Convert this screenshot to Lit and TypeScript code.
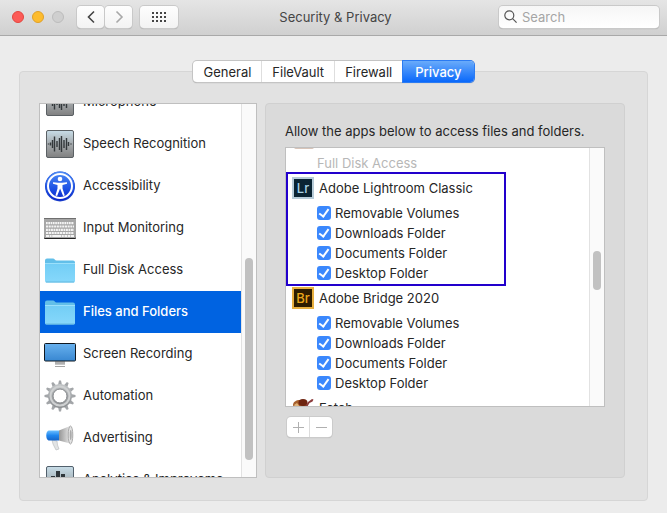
import { LitElement, html, css, svg } from "lit";
import { customElement } from "lit/decorators.js";
import { classMap } from "lit/directives/class-map.js";

const folder = svg`<svg width="32" height="32" viewBox="0 0 32 32">
  <path d="M1 6.500a2 2 0 0 1 2-2h6c1.500 0 2 2 3.500 2H29a2 2 0 0 1 2 2v4H1z" fill="#62bfe9"/>
  <rect x="1" y="9" width="30" height="19.500" rx="1.500" fill="url(#folderFill)"/>
  <path d="M1 9.500h30" stroke="#9be0fb"/><path d="M2 28h28" stroke="#62b8df"/>
  <defs><linearGradient id="folderFill" x2="0" y2="1"><stop stop-color="#72cdf5"/><stop offset="1" stop-color="#86d8fb"/></linearGradient></defs></svg>`;

const wave = svg`<svg width="32" height="32" viewBox="0 0 32 32">
  <defs><linearGradient id="waveFill" x2="0" y2="1"><stop stop-color="#c8dde8"/><stop offset=".5" stop-color="#a5aaad"/><stop offset="1" stop-color="#808080"/></linearGradient></defs>
  <rect x="2.500" y="2.500" width="27" height="27" rx="1.500" fill="url(#waveFill)" stroke="#5b6064"/>
  <path d="M4.500 15.500v1M6.500 14.500v3M8.500 12v8M10.500 8.500v15M13 13v6M15.500 10v12M17.500 8v16M20 12v8M22.500 10v12M24.500 14v4M27 15.500v1" stroke="#33383b" stroke-width="1.400"/></svg>`;

const accessibility = svg`<svg width="32" height="32" viewBox="0 0 32 32">
  <defs><linearGradient id="accFill" x2="0" y2="1"><stop stop-color="#4f8df5"/><stop offset=".6" stop-color="#1c50e4"/><stop offset="1" stop-color="#0a22c8"/></linearGradient></defs>
  <circle cx="16" cy="16.500" r="15" fill="#1d45cc"/><circle cx="16" cy="16" r="14.500" fill="url(#accFill)"/>
  <circle cx="16" cy="16" r="12" fill="none" stroke="#fff" stroke-width="2"/>
  <circle cx="16" cy="9" r="2.300" fill="#fff"/>
  <path d="M9 12.200l5 .6h4l5-.6v1.600l-4.500 1.200v3.500l2.300 7-1.700.5-3-7.500-3 7.500-1.700-.5 2.100-7V15L9 13.800z" fill="#fff"/></svg>`;

const keyboard = svg`<svg width="32" height="32" viewBox="0 0 32 32">
  <rect x="0" y="7" width="32" height="20" rx="1" fill="#222"/><rect x="0" y="6" width="32" height="20" rx="1" fill="#a6a6a6"/>
  <rect x="0" y="6" width="32" height="1" fill="#6f6f6f"/>
  <g stroke="#f4f4f4" stroke-width="2.200"><path d="M2 11.200h28" stroke-dasharray="1.700 .6"/><path d="M2 14.500h28" stroke-dasharray="2.100 .6"/><path d="M2 17.800h28" stroke-dasharray="1.900 .6"/><path d="M2 21h28" stroke-dasharray="2.200 .6"/><path d="M2 24h28" stroke-dasharray="3 .6 2 .6 9 .6 2 .6"/></g></svg>`;

const screen = svg`<svg width="32" height="32" viewBox="0 0 32 32">
  <defs><linearGradient id="screenFill" x2="0" y2="1"><stop stop-color="#68b1ee"/><stop offset="1" stop-color="#3887d1"/></linearGradient></defs>
  <path d="M11 23h10v4H11z" fill="#c6c6c6"/><path d="M11 25h10" stroke="#9a9a9a"/><path d="M11 28.500h10" stroke="#a5a5a5"/>
  <rect x=".5" y="5.500" width="31" height="17.500" rx="1" fill="url(#screenFill)" stroke="#101820"/></svg>`;

const gear = svg`<svg width="32" height="32" viewBox="0 0 32 32">
  <defs><linearGradient id="gearFill" x2="0" y2="1"><stop stop-color="#c3c6c8"/><stop offset="1" stop-color="#8b8e91"/></linearGradient></defs>
  ${[0, 30, 60, 90, 120, 150].map(
    (a) => svg`<path d="M15 .5h2l1 4.500v22l-1 4.500h-2l-1-4.500V5z" fill="#a3a6a9" transform="rotate(${a} 16 16)"/>`
  )}<circle cx="16" cy="16" r="12" fill="url(#gearFill)"/>
  <circle cx="16" cy="16" r="9.500" fill="none" stroke="#cfd1d2" stroke-width="2"/>
  <circle cx="16" cy="16" r="7" fill="#fff" stroke="#85888b"/></svg>`;

const megaphone = svg`<svg width="32" height="32" viewBox="0 0 32 32">
  <defs><linearGradient id="hornFill" x2="1"><stop stop-color="#969696"/><stop offset=".7" stop-color="#dcdcdc"/><stop offset="1" stop-color="#bdbdbd"/></linearGradient>
  <linearGradient id="blueFill" x2="0" y2="1"><stop stop-color="#6cc0ff"/><stop offset=".5" stop-color="#1f86ee"/><stop offset="1" stop-color="#1765c8"/></linearGradient></defs>
  <path d="M8 18l5 1 .5 4 1.500 4-3 1L9 22z" fill="#e2e4e5" stroke="#b4b7b9" stroke-width=".6"/>
  <path d="M15 8.500l11-4.500c3.500 4 3.500 13 0 17.500l-11-3z" fill="url(#hornFill)"/>
  <ellipse cx="26.500" cy="13" rx="2.300" ry="9" fill="#e4e4e4" stroke="#aaa"/><ellipse cx="26.700" cy="13" rx="1" ry="5" fill="#aaa"/>
  <path d="M4.500 8.500H15v10H4.500c-3-1-3-9 0-10z" fill="url(#blueFill)"/></svg>`;

const chart = svg`<svg width="32" height="32" viewBox="0 0 32 32">
  <defs><linearGradient id="chartFill" x2="0" y2="1"><stop stop-color="#c8dde8"/><stop offset="1" stop-color="#8b8f91"/></linearGradient></defs>
  <rect x="2.500" y="2.500" width="27" height="27" rx="1.500" fill="url(#chartFill)" stroke="#52606c"/>
  <path d="M7 12h4v14H7zM12 7h4v19h-4zM17 10h4v16h-4zM22 14h4v12h-4z" fill="#30373c"/></svg>`;

const fetchDog = svg`<svg width="22" height="22" viewBox="0 0 22 22">
  <path d="M1 8c0-3 3-5 7-5l5 1 2 5-3 11H4z" fill="#a65f2c"/><path d="M2 8l3-2 3 4-3 3z" fill="#e0b27a"/>
  <ellipse cx="11" cy="5.500" rx="4.500" ry="3.500" fill="#6e2410"/><path d="M13 10l3-5 4-3 1.500.500-1 2-3 1.500-3 5z" fill="#8a3a3a"/></svg>`;

const places = [
  { name: "Microphone", icon: wave },
  { name: "Speech Recognition", icon: wave },
  { name: "Accessibility", icon: accessibility },
  { name: "Input Monitoring", icon: keyboard },
  { name: "Full Disk Access", icon: folder },
  { name: "Files and Folders", icon: folder, selected: true },
  { name: "Screen Recording", icon: screen },
  { name: "Automation", icon: gear },
  { name: "Advertising", icon: megaphone },
  { name: "Analytics & Improveme…", icon: chart },
];

const grants = ["Removable Volumes", "Downloads Folder", "Documents Folder", "Desktop Folder"];

@customElement("app-root")
export class AppRoot extends LitElement {
  static styles = css`
    :host { display: flex; flex-direction: column; height: 100vh; background: #ececec; color: #262626;
      font: 13px/20px Inter, "Liberation Sans", sans-serif; }
    *, *::before, *::after { box-sizing: border-box; }
    svg { display: block; flex: none; }
    button, input { font: inherit; color: inherit; margin: 0; padding: 0; border: 0; }
    ul { list-style: none; margin: 0; padding: 0; }

    .titlebar { flex: none; display: grid; grid-template-columns: 1fr auto 1fr; align-items: center; height: 36px;
      padding: 0 8px 2px 12px; background: linear-gradient(#e5e5e5, #d0d0d0); border-bottom: 1px solid #a9a9a9; }
    .tools { display: flex; align-items: center; }
    .lights { display: flex; gap: 8px; margin-right: 13px; }
    .light { width: 12px; height: 12px; border-radius: 50%; border: 1px solid #bcbcbc; background: #cfcfcf; }
    .close { background: #fc5b57; border-color: #e2463f; }
    .minimize { background: #fdbc2e; border-color: #e0a028; }
    .tool { display: grid; place-items: center; height: 22px; width: 27px; border-radius: 4px;
      background: linear-gradient(#fefefe, #f3f3f3); box-shadow: 0 0 0 1px #c9c9c9, 0 1px 1px #999; margin-right: 1px; }
    .grid { width: 38px; margin-left: 7px; }
    .title { margin: 0; font-size: 13px; font-weight: 400; color: #454545; }
    .search { justify-self: end; display: flex; align-items: center; gap: 5px; width: 160px; height: 22px; padding: 0 5px;
      border-radius: 4px; background: linear-gradient(#f6f6f6, #fff); box-shadow: 0 0 0 1px #c9c9c9, 0 1px 1px #999; }
    .search input { flex: 1; min-width: 0; background: none; outline: 0; }
    .search input::placeholder { color: #a5a5a5; opacity: 1; }

    .content { flex: 1; min-height: 0; display: flex; flex-direction: column; padding: 25px 19px 12px; }
    .tabs { display: flex; align-self: center; height: 21px; position: relative; border-radius: 4px; background: #fff;
      box-shadow: 0 0 0 1px #c4c4c4, 0 1px 1px #999; margin-bottom: -11px; }
    .tab { padding: 0 10px; background: none; border-right: 1px solid #dedede; }
    .tab.on { padding: 0 12px; border: 0; border-radius: 0 4px 4px 0; color: #fff; font-weight: 500;
      background: linear-gradient(#69abfa, #0a68fb); box-shadow: 0 0 0 1px #2b7bf2; }

    .panel { flex: 1; min-height: 0; display: flex; gap: 8px; padding: 31px 22px 22px 19px;
      background: #e2e2e2; border: 1px solid #d6d6d6; border-radius: 4px; }
    .box { display: flex; min-height: 0; background: #fff; border: 1px solid #bfbfbf; overflow: hidden; }
    .scroll { flex: 1; min-width: 0; overflow: hidden; }
    .track { flex: none; width: 15px; border-left: 1px solid #e2e2e2; background: #fafafa; padding-left: 3px; }
    .thumb { width: 8px; border-radius: 4px; background: #c1c1c1; }

    .sidebar { flex: none; width: 218px; }
    .sidebar ul { margin-top: -23px; }
    .sidebar .thumb { height: 202px; margin-top: 154px; }
    .place { display: flex; width: 100%; height: 42px; align-items: center; gap: 7px; padding: 0 4px 3px; text-decoration: none;
      color: inherit; white-space: nowrap; }
    .place svg { margin-top: 3px; }
    .place.on { background: #0063e1; color: #fff; font-weight: 500; }

    .detail { flex: 1; min-width: 0; display: flex; flex-direction: column; padding: 17px 19px 40px;
      background: #dadada; border: 1px solid #d0d0d0; border-radius: 4px; }
    .lead { margin: 0 0 6px; }
    .apps { flex: 1; }
    .groups { margin-top: -15px; }
    .apps .thumb { height: 39px; margin-top: 103px; }
    .group { position: relative; }
    .group.marked::after { content: ""; position: absolute; top: -1px; left: 0; width: 220px; bottom: -3px; border: 2px solid #2200cc; pointer-events: none; }
    .app { display: flex; align-items: center; gap: 5px; height: 30px; padding-left: 6px; }
    .badge { display: grid; place-items: center; width: 22px; height: 22px; border: 2px solid; font-size: 13px; line-height: 18px; font-weight: 500; }
    .lr { background: #0a2433; border-color: #b7ccd9; color: #a9d3e6; }
    .br { background: #2e1d00; border-color: #e8b040; color: #eaa81c; }
    .grant { display: flex; align-items: center; gap: 4px; height: 20px; padding-left: 31px; }
    .grant input { appearance: none; width: 14px; height: 14px; border-radius: 3px; background: #3b88fd; display: grid; place-items: center; }
    .grant input:checked::before { content: ""; width: 6px; height: 10px; border: solid #fff; border-width: 0 2px 2px 0; transform: translateY(-1px) rotate(36deg); }
    .off { height: 20px; padding-left: 31px; color: #b7b7b7; }
    .peek { height: 20px; padding-left: 8px; }
    .peek span { display: block; width: 20px; height: 16px; border-radius: 2px; background: #d8c4b8; }
    .edit { display: flex; align-self: start; margin: 10px 0 0 2px; height: 20px; border-radius: 4px; background: #fff;
      box-shadow: 0 0 0 1px #cbcbcb, 0 1px 1px #aaa; }
    .edit button { display: grid; place-items: center; width: 22px; background: none; }
    .edit button + button { width: 23px; border-left: 1px solid #dcdcdc; }
  `;

  private group(name: string, icon: unknown, marked = false) {
    return html`<section class=${classMap({ group: true, marked })}>
      <div class="app">${icon}<span>${name}</span></div>
      ${grants.map((g) => html`<label class="grant"><input type="checkbox" checked />${g}</label>`)}
    </section>`;
  }

  render() {
    return html`
      <header class="titlebar">
        <div class="tools">
          <div class="lights">
            <button class="light close" aria-label="Close"></button>
            <button class="light minimize" aria-label="Minimize"></button>
            <button class="light" aria-label="Zoom" disabled></button>
          </div>
          <button class="tool" aria-label="Back"><svg width="12" height="14" viewBox="0 0 12 14" fill="none" stroke="#444" stroke-width="1.600"><path d="M9 1.500L3.500 7 9 12.500"/></svg></button>
          <button class="tool" aria-label="Forward"><svg width="12" height="14" viewBox="0 0 12 14" fill="none" stroke="#a8a8a8" stroke-width="1.600"><path d="M3.500 1.500L9 7l-5.500 5.500"/></svg></button>
          <button class="tool grid" aria-label="Show All"><svg width="14" height="10" viewBox="0 0 14 10" fill="#444">${[0, 4, 8].map((y) => [0, 4, 8, 12].map((x) => svg`<rect x=${x} y=${y} width="2" height="2"/>`))}</svg></button>
        </div>
        <h1 class="title">Security &amp; Privacy</h1>
        <label class="search"><svg width="13" height="13" viewBox="0 0 13 13" fill="none" stroke="#555" stroke-width="1.200"><circle cx="5.300" cy="5.300" r="4.500"/><path d="M8.600 8.600l4 4"/></svg><input type="search" placeholder="Search" aria-label="Search" /></label>
      </header>
      <main class="content">
        <nav class="tabs">
          <button class="tab">General</button><button class="tab">FileVault</button><button class="tab">Firewall</button><button class="tab on">Privacy</button>
        </nav>
        <div class="panel">
          <div class="box sidebar">
            <div class="scroll"><ul>${places.map((p) => html`<li><a href="#" class=${classMap({ place: true, on: !!p.selected })}>${p.icon}<span>${p.name}</span></a></li>`)}</ul></div>
            <div class="track"><div class="thumb"></div></div>
          </div>
          <section class="detail">
            <p class="lead">Allow the apps below to access files and folders.</p>
            <div class="box apps">
              <div class="scroll"><div class="groups">
                <div class="peek"><span></span></div>
                <div class="off">Full Disk Access</div>
                ${this.group("Adobe Lightroom Classic", html`<span class="badge lr">Lr</span>`, true)}
                ${this.group("Adobe Bridge 2020", html`<span class="badge br">Br</span>`)}
                <div class="app">${fetchDog}<span>Fetch</span></div>
              </div></div>
              <div class="track"><div class="thumb"></div></div>
            </div>
            <div class="edit">
              <button aria-label="Add"><svg width="11" height="11" viewBox="0 0 11 11" stroke="#b0b0b0"><path d="M0 5.500h11M5.500 0v11"/></svg></button>
              <button aria-label="Remove"><svg width="11" height="11" viewBox="0 0 11 11" stroke="#b0b0b0"><path d="M0 5.500h11"/></svg></button>
            </div>
          </section>
        </div>
      </main>`;
  }
}
